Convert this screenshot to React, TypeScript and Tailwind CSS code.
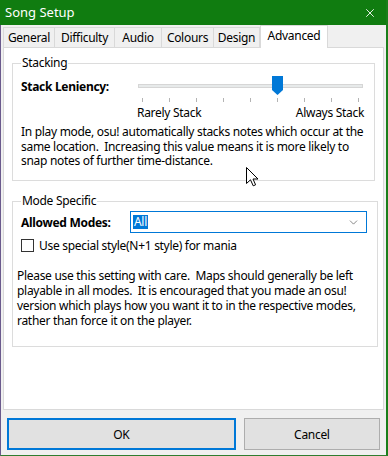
import { ChevronDown, X } from 'lucide-react';

const tabs = ['General', 'Difficulty', 'Audio', 'Colours', 'Design'];
const tabWidths = ['w-[52px]', 'w-[61px]', 'w-[48px]', 'w-[53px]', 'w-[47px]'];

export default function App() {
  return (
    <div className="relative w-[388px] h-[456px] flex flex-col bg-[#f0f0f0] border-l border-l-[#6a5a8c] border-r-2 border-b border-r-[#1a7f1a] border-b-[#2f7d2f] font-['Noto_Sans',sans-serif] text-[12px] leading-[15px] text-black tracking-[-0.3px]">
      {/* Title bar */}
      <div className="h-[25px] shrink-0 bg-[#107c10] flex items-center justify-between pl-[5px] pr-[9px] -ml-px">
        <span className="text-white text-[13px] tracking-normal">Song Setup</span>
        <X className="w-[14px] h-[14px] text-white" strokeWidth={1.5} />
      </div>

      {/* Tabs */}
      <div className="h-[22px] shrink-0 flex items-end pl-[2px] relative z-10">
        {tabs.map((t, i) => (
          <div
            key={t}
            className={`${tabWidths[i]} h-[20px] flex items-center justify-center border border-[#d9d9d9] border-b-0 -mr-px bg-[#f0f0f0]`}
          >
            {t}
          </div>
        ))}
        <div className="w-[68px] h-[23px] -mb-px ml-px flex items-start justify-center pt-[2px] bg-white border border-[#d9d9d9] border-b-0">
          Advanced
        </div>
      </div>

      {/* Content panel */}
      <div className="mx-[2px] h-[363px] bg-white border border-[#d9d9d9] pt-[8px] px-[8px]">
        {/* Stacking */}
        <fieldset className="h-[125px] border border-[#dcdcdc] px-[8px]">
          <legend className="px-[1px] leading-[14px]">Stacking</legend>
          <div className="flex items-start mt-[9px]">
            <span className="font-bold w-[117px] shrink-0">Stack Leniency:</span>
            <div className="relative w-[225px] h-[40px]">
              <div className="absolute left-0 right-0 top-[5px] h-[4px] bg-[#e7eaea] border border-[#d6d6d6]" />
              <svg className="absolute left-[134px] top-[-3px]" width="11" height="19" viewBox="0 0 11 19">
                <path d="M0 0H11V14L5.5 19L0 14Z" fill="#0078d7" />
              </svg>
              <div className="absolute top-[19px] left-[4px] right-[4px] flex justify-between">
                {Array.from({ length: 9 }).map((_, i) => (
                  <div key={i} className="w-px h-[4px] bg-[#b4b4b4]" />
                ))}
              </div>
              <div className="absolute top-[26px] left-[-1px] right-[-1px] flex justify-between">
                <span>Rarely Stack</span>
                <span>Always Stack</span>
              </div>
            </div>
          </div>
          <p className="mt-[6px] leading-[14.5px] whitespace-pre">
            {'In play mode, osu! automatically stacks notes which occur at the\nsame location.  Increasing this value means it is more likely to\nsnap notes of further time-distance.'}
          </p>
        </fieldset>

        {/* Mode specific */}
        <fieldset className="mt-[13px] h-[153px] border border-[#dcdcdc] pl-[8px] pr-[10px]">
          <legend className="px-[1px] leading-[14px]">Mode Specific</legend>
          <div className="flex items-center mt-[3px]">
            <span className="font-bold w-[109px] shrink-0">Allowed Modes:</span>
            <div className="w-[237px] h-[22px] border border-[#0078d7] flex items-center justify-between pl-[2px] pr-[6px]">
              <span className="bg-[#0078d7] text-white px-px leading-[14px]">All</span>
              <ChevronDown className="w-[13px] h-[13px] text-[#505050]" strokeWidth={1.25} />
            </div>
          </div>
          <div className="flex items-center mt-[5px]">
            <div className="w-[13px] h-[13px] border border-[#333] bg-white" />
            <span className="ml-[5px]">Use special style(N+1 style) for mania</span>
          </div>
          <p className="mt-[15px] -ml-[4px] leading-[15px] whitespace-pre">
            {'Please use this setting with care.  Maps should generally be left\nplayable in all modes.  It is encouraged that you made an osu!\nversion which plays how you want it to in the respective modes,\nrather than force it on the player.'}
          </p>
        </fieldset>
      </div>

      {/* Buttons */}
      <div className="flex gap-[8px] px-[6px] mt-[8px]">
        <button className="w-[230px] h-[32px] bg-[#e1e1e1] border-2 border-[#0078d7] text-black">OK</button>
        <button className="w-[137px] h-[32px] bg-[#e1e1e1] border border-[#adadad] text-black">Cancel</button>
      </div>

      {/* Mouse cursor */}
      <svg className="absolute left-[245px] top-[167px]" width="13" height="20" viewBox="0 0 13 20">
        <path d="M0.5 0.5V16.5L4.5 12.8L7.2 18.8L9.6 17.8L7 12H12Z" fill="white" stroke="black" strokeWidth="1" strokeLinejoin="miter" />
      </svg>
    </div>
  );
}
